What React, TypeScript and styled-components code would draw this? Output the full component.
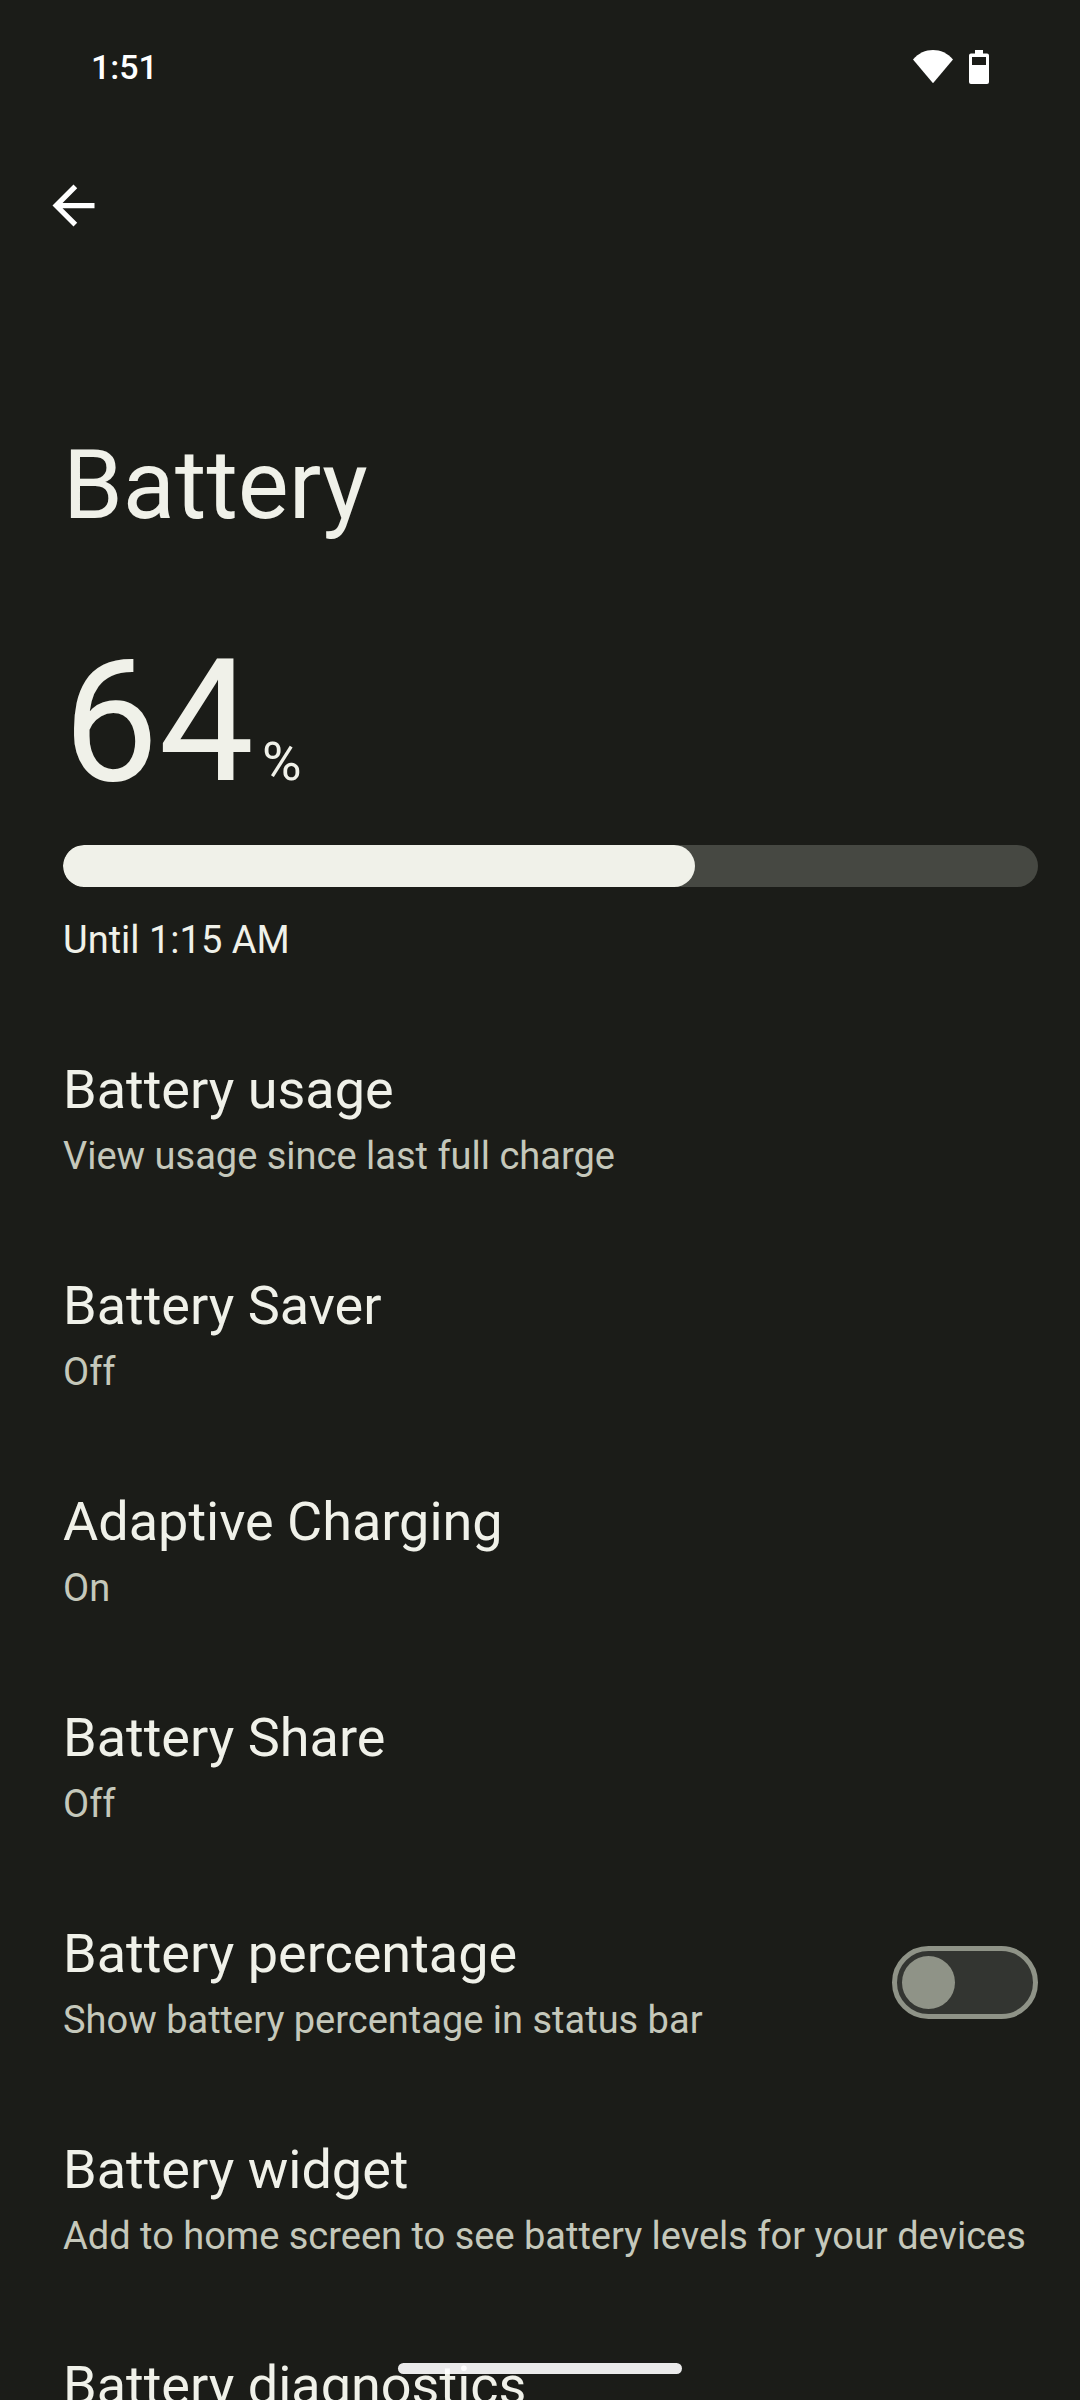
import React, { useId, useState } from "react";
import styled, { ThemeProvider, createGlobalStyle } from "styled-components";

const theme = {
  background: "#1b1c18",
  text: "#f0f1e9",
  muted: "#c5c8bb",
  track: "#464842",
  outline: "#8f9387",
  switchTrack: "#333531",
  side: "63px",
  end: "42px",
};

type AppTheme = typeof theme;

const GlobalStyle = createGlobalStyle`
  *, *::before, *::after { box-sizing: border-box; }
  body { margin: 0; background: ${theme.background}; }
`;

const Screen = styled.div<{ theme: AppTheme }>`
  position: relative;
  display: flex;
  flex-direction: column;
  height: 100vh;
  overflow: hidden;
  background: ${({ theme }) => theme.background};
  color: ${({ theme }) => theme.text};
  font-family: Roboto, "Noto Sans", sans-serif;
`;

const StatusBar = styled.header`
  flex: none;
  display: flex;
  align-items: center;
  justify-content: space-between;
  height: 134px;
  padding: 0 91px;
  color: #fff;
`;

const Clock = styled.time`
  font-size: 34px;
  line-height: 42px;
  font-weight: 500;
`;

const StatusIcons = styled.div`
  display: flex;
  align-items: center;
  gap: 16px;
`;

const Toolbar = styled.nav`
  flex: none;
  display: flex;
  align-items: center;
  height: 142px;
  padding: 0 42px;
`;

const BackButton = styled.button`
  display: flex;
  padding: 0;
  border: 0;
  background: none;
  color: #fff;
  cursor: pointer;
`;

const Content = styled.main`
  flex: 1;
  min-height: 0;
  overflow-y: auto;
  scrollbar-width: none;
  padding-top: 153px;
`;

const PageTitle = styled.h1<{ theme: AppTheme }>`
  margin: 0;
  padding: 0 ${({ theme }) => theme.side};
  font-size: 96px;
  line-height: 112px;
  font-weight: 400;
`;

const Summary = styled.section<{ theme: AppTheme }>`
  display: flex;
  flex-direction: column;
  padding: 96px ${({ theme }) => theme.end} 42px ${({ theme }) => theme.side};
`;

const Level = styled.div`
  display: flex;
  align-items: baseline;
  gap: 8px;
  margin-bottom: 38px;
`;

const LevelNumber = styled.span`
  font-size: 170px;
  line-height: 170px;
`;

const LevelUnit = styled.span`
  font-size: 54px;
  line-height: 76px;
`;

const Meter = styled.div<{ theme: AppTheme }>`
  height: 42px;
  margin-bottom: 25px;
  border-radius: 21px;
  overflow: hidden;
  background: ${({ theme }) => theme.track};
`;

/* The rounded cap stays visible at 0%; the rest grows with the level. */
const MeterFill = styled.div<{ theme: AppTheme; $level: number }>`
  width: calc(21px + (100% - 21px) * ${({ $level }) => $level} / 100);
  height: 100%;
  border-radius: 21px;
  background: ${({ theme }) => theme.text};
`;

const Estimate = styled.p`
  margin: 0;
  font-size: 38px;
  line-height: 56px;
`;

const List = styled.ul`
  margin: 0;
  padding: 0;
  list-style: none;
`;

const rowStyle = `
  display: flex;
  align-items: center;
  justify-content: space-between;
  min-height: 216px;
  padding: 42px 42px 42px 63px;
  color: inherit;
  text-decoration: none;
  cursor: pointer;
`;

const LinkRow = styled.a`
  ${rowStyle}
`;

const SwitchRow = styled.label`
  ${rowStyle}
`;

const RowText = styled.span`
  display: flex;
  flex-direction: column;
  min-width: 0;
`;

const RowTitle = styled.span`
  font-size: 54px;
  line-height: 76px;
`;

const RowSummary = styled.span<{ theme: AppTheme }>`
  min-height: 56px;
  font-size: 38px;
  line-height: 56px;
  color: ${({ theme }) => theme.muted};
`;

const Switch = styled.input<{ theme: AppTheme }>`
  appearance: none;
  flex: none;
  display: flex;
  align-items: center;
  width: 146px;
  height: 73px;
  margin: 0;
  padding: 0 5px;
  border: 5px solid ${({ theme }) => theme.outline};
  border-radius: 37px;
  background: ${({ theme }) => theme.switchTrack};
  cursor: pointer;

  &::before {
    content: "";
    width: 53px;
    height: 53px;
    border-radius: 50%;
    background: ${({ theme }) => theme.outline};
  }

  &:checked {
    justify-content: flex-end;
  }

  &:checked::before {
    background: ${({ theme }) => theme.text};
  }
`;

const HomeBar = styled.div`
  position: absolute;
  bottom: 26px;
  left: 50%;
  width: 284px;
  height: 11px;
  margin-left: -142px;
  border-radius: 6px;
  background: rgba(255, 255, 255, 0.91);
`;

const WifiIcon = () => (
  <svg width="40" height="34" viewBox="0 0 40 34" fill="currentColor" aria-hidden="true">
    <path d="M0 9.5C5.500 3 12.500 0 20 0s14.500 3 20 9.500L20 33.200z" />
  </svg>
);

const BatteryIcon = () => (
  <svg width="20" height="34" viewBox="0 0 20 34" fill="currentColor" aria-hidden="true">
    <path
      fillRule="evenodd"
      d="M6 0h8v3.500h4a2 2 0 0 1 2 2V32a2 2 0 0 1-2 2H2a2 2 0 0 1-2-2V5.500a2 2 0 0 1 2-2h4zM3 7v8h14V7z"
    />
  </svg>
);

const BackIcon = () => (
  <svg width="63" height="63" viewBox="0 0 24 24" fill="currentColor" aria-hidden="true">
    <path d="M20 11H7.830l5.590-5.590L12 4l-8 8 8 8 1.410-1.410L7.830 13H20z" />
  </svg>
);

type Setting = {
  title: string;
  summary?: string;
  toggle?: boolean;
};

const settings: Setting[] = [
  { title: "Battery usage", summary: "View usage since last full charge" },
  { title: "Battery Saver", summary: "Off" },
  { title: "Adaptive Charging", summary: "On" },
  { title: "Battery Share", summary: "Off" },
  { title: "Battery percentage", summary: "Show battery percentage in status bar", toggle: true },
  { title: "Battery widget", summary: "Add to home screen to see battery levels for your devices" },
  { title: "Battery diagnostics" },
];

const SettingText = ({ title, summary }: Setting) => (
  <RowText>
    <RowTitle>{title}</RowTitle>
    <RowSummary>{summary}</RowSummary>
  </RowText>
);

function ToggleSetting(props: Setting) {
  const id = useId();
  const [on, setOn] = useState(false);
  return (
    <SwitchRow htmlFor={id}>
      <SettingText {...props} />
      <Switch
        id={id}
        type="checkbox"
        role="switch"
        checked={on}
        onChange={(event) => setOn(event.target.checked)}
      />
    </SwitchRow>
  );
}

export default function App() {
  const level = 64;
  return (
    <ThemeProvider theme={theme}>
      <GlobalStyle />
      <Screen>
        <StatusBar>
          <Clock>1:51</Clock>
          <StatusIcons>
            <WifiIcon />
            <BatteryIcon />
          </StatusIcons>
        </StatusBar>
        <Toolbar>
          <BackButton type="button" aria-label="Back">
            <BackIcon />
          </BackButton>
        </Toolbar>
        <Content>
          <PageTitle>Battery</PageTitle>
          <Summary>
            <Level>
              <LevelNumber>{level}</LevelNumber>
              <LevelUnit>%</LevelUnit>
            </Level>
            <Meter
              role="progressbar"
              aria-label="Battery level"
              aria-valuemin={0}
              aria-valuemax={100}
              aria-valuenow={level}
            >
              <MeterFill $level={level} />
            </Meter>
            <Estimate>Until 1:15 AM</Estimate>
          </Summary>
          <List>
            {settings.map((setting) => (
              <li key={setting.title}>
                {setting.toggle ? (
                  <ToggleSetting {...setting} />
                ) : (
                  <LinkRow href={`#${setting.title.toLowerCase().replace(/ /g, "-")}`}>
                    <SettingText {...setting} />
                  </LinkRow>
                )}
              </li>
            ))}
          </List>
        </Content>
        <HomeBar />
      </Screen>
    </ThemeProvider>
  );
}
